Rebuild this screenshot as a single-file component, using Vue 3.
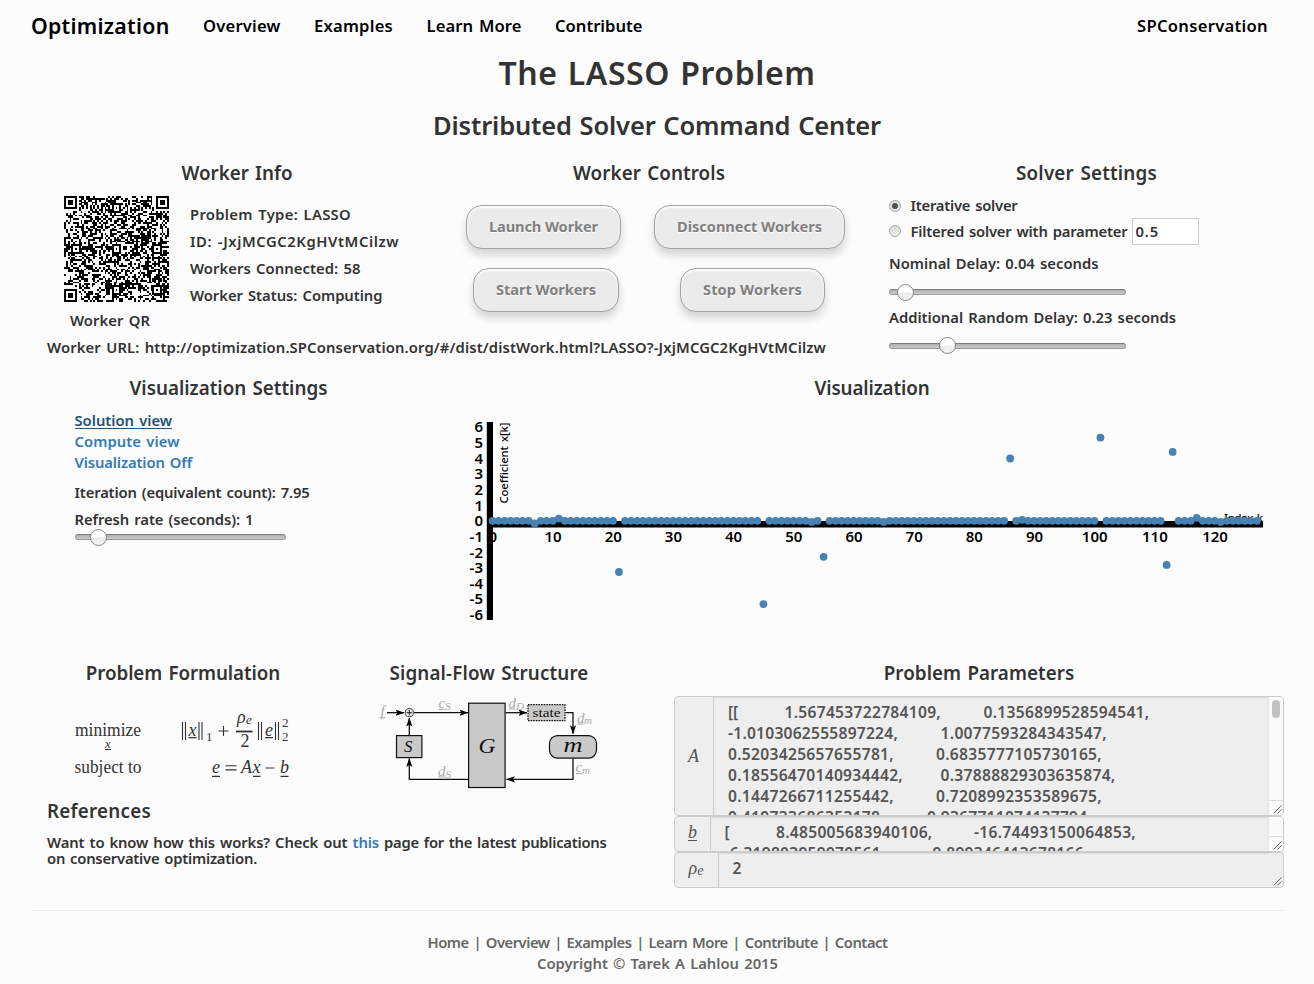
<script setup>
// Spreads a label's tracking so that it fills the given measure in pixels.
const vFit = {
  mounted(el, { value }) {
    const width = el.getBoundingClientRect().width
    el.style.letterSpacing = `${(value - width) / el.textContent.length}px`
  },
}

const navLinks = [['Overview', 77.5], ['Examples', 79], ['Learn More', 95], ['Contribute', 87.5]]

const workerId = '-JxjMCGC2KgHVtMCilzw'
const workerUrl = `http://optimization.SPConservation.org/#/dist/distWork.html?LASSO?${workerId}`
const info = [
  ['Problem Type: LASSO', 161],
  [`ID: ${workerId}`, 209],
  ['Workers Connected: 58', 170.5],
  ['Worker Status: Computing', 192.5],
]

// --- QR code (version 10, level H, byte mode) ---
const EXP = []
const LOG = []
for (let i = 0, v = 1; i < 255; i++) {
  EXP[i] = v
  LOG[v] = i
  v <<= 1
  if (v > 255) v ^= 0x11d
}
const mul = (a, b) => (a && b ? EXP[(LOG[a] + LOG[b]) % 255] : 0)

function errorWords(data, n) {
  let g = [1]
  for (let i = 0; i < n; i++) {
    const r = new Array(g.length + 1).fill(0)
    g.forEach((c, j) => {
      r[j] ^= c
      r[j + 1] ^= mul(c, EXP[i])
    })
    g = r
  }
  const m = [...data, ...new Array(n).fill(0)]
  for (let i = 0; i < data.length; i++) {
    const f = m[i]
    if (f) g.forEach((c, j) => { m[i + j] ^= mul(c, f) })
  }
  return m.slice(data.length)
}

function qrPath(text) {
  const N = 57
  const nec = 28
  const blocks = [15, 15, 15, 15, 15, 15, 16, 16]
  const mask = 5
  const masked = (r, c) => ((r * c) % 2) + ((r * c) % 3) === 0
  const byte = (v) => v.toString(2).padStart(8, '0')
  let bits = '0100' + text.length.toString(2).padStart(16, '0')
  for (const ch of text) bits += byte(ch.charCodeAt(0))
  bits += '0000'
  const d = []
  for (let i = 0; i < bits.length; i += 8) d.push(parseInt(bits.slice(i, i + 8), 2))
  for (let k = 0; d.length < 122; k++) d.push(k % 2 ? 0x11 : 0xec)
  let p = 0
  const db = blocks.map((n) => d.slice(p, (p += n)))
  const eb = db.map((b) => errorWords(b, nec))
  const out = []
  for (let i = 0; i < 16; i++) db.forEach((b) => i < b.length && out.push(b[i]))
  for (let i = 0; i < nec; i++) eb.forEach((b) => out.push(b[i]))
  const stream = out.map(byte).join('')

  const m = Array.from({ length: N }, () => new Array(N).fill(null))
  for (const [y, x] of [[0, 0], [0, N - 7], [N - 7, 0]])
    for (let r = -1; r < 8; r++)
      for (let c = -1; c < 8; c++)
        if (m[y + r] && m[y + r][x + c] !== undefined) {
          const k = Math.max(Math.abs(r - 3), Math.abs(c - 3))
          m[y + r][x + c] = k === 4 || k === 2 ? 0 : 1
        }
  for (const y of [6, 28, 50])
    for (const x of [6, 28, 50])
      if (m[y][x] === null)
        for (let r = -2; r < 3; r++)
          for (let c = -2; c < 3; c++)
            m[y + r][x + c] = Math.max(Math.abs(r), Math.abs(c)) === 1 ? 0 : 1
  for (let i = 8; i < N - 8; i++) m[6][i] = m[i][6] = i % 2 ? 0 : 1
  const f = (2 << 3) | mask
  let rem = f << 10
  for (let i = 14; i >= 10; i--) if ((rem >> i) & 1) rem ^= 0x537 << (i - 10)
  const fmt = ((f << 10) | rem) ^ 0x5412
  for (let i = 0; i < 15; i++) {
    const b = (fmt >> i) & 1
    m[i < 6 ? i : i < 8 ? i + 1 : N - 15 + i][8] = b
    m[8][i < 8 ? N - 1 - i : i < 9 ? 7 : 14 - i] = b
  }
  m[N - 8][8] = 1
  for (let i = 0; i < 18; i++) {
    const b = (0x0a4d3 >> i) & 1
    m[Math.floor(i / 3)][N - 11 + (i % 3)] = b
    m[N - 11 + (i % 3)][Math.floor(i / 3)] = b
  }
  let k = 0
  let up = true
  for (let c = N - 1; c > 0; c -= 2) {
    if (c === 6) c--
    for (let i = 0; i < N; i++) {
      const r = up ? N - 1 - i : i
      for (const x of [c, c - 1])
        if (m[r][x] === null) m[r][x] = +(stream[k++] || 0) ^ (masked(r, x) ? 1 : 0)
    }
    up = !up
  }
  return m.map((row, y) => row.map((v, x) => (v ? `M${x} ${y}h1v1h-1z` : '')).join('')).join('')
}
const qr = qrPath(workerUrl)

// --- Solution chart ---
const xAt = (k) => 35.6 + 6.018 * k
const yAt = (v) => 105.8 - 15.65 * v
const spikes = {
  7: -0.17, 11: 0.14, 21: -3.27, 45: -5.32, 53: -0.07, 55: -2.3, 65: -0.07, 86: 3.98,
  88: 0.06, 101: 5.32, 112: -2.82, 113: 4.4, 117: 0.19, 121: -0.07,
}
const points = Array.from({ length: 128 }, (_, k) => ({ k, v: spikes[k] || 0 }))
const yTicks = [6, 5, 4, 3, 2, 1, 0, -1, -2, -3, -4, -5, -6]
const xTicks = [0, 10, 20, 30, 40, 50, 60, 70, 80, 90, 100, 110, 120]

// --- Problem parameters: [text, left edge, width] per value ---
const matrix = [
  [['[[', 0, 10], ['1.567453722784109,', 56.5, 156.5], ['0.1356899528594541,', 255.5, 166]],
  [['-1.0103062555897224,', 0, 170], ['1.0077593284343547,', 212.5, 166.5]],
  [['0.5203425657655781,', 0, 166], ['0.6835777105730165,', 208, 166]],
  [['0.18556470140934442,', 0, 175], ['0.37888829303635874,', 212.5, 175]],
  [['0.1447266711255442,', 0, 166], ['0.7208992353589675,', 208, 166]],
  [['0.419733686353178,', 0, 157], ['0.9367711074137794,', 199, 165]],
]
const vector = [
  [['[', 0, 4], ['8.485005683940106,', 51.5, 156.5], ['-16.74493150064853,', 249.5, 162]],
  [['-6.319803959970561,', 0, 161], ['9.899346413678166,', 208, 156]],
]
const gapBefore = (line, i) => line[i][1] - (i ? line[i - 1][1] + line[i - 1][2] : 0)

const footerLinks = 'Home | Overview | Examples | Learn More | Contribute | Contact'
</script>

<template>
  <div class="page">
    <header class="nav">
      <a class="brand"><span v-fit="138.5">Optimization</span></a>
      <nav class="links">
        <a v-for="[label, w] in navLinks" :key="label"><span v-fit="w">{{ label }}</span></a>
      </nav>
      <a class="right"><span v-fit="131">SPConservation</span></a>
    </header>

    <h1><span v-fit="317">The LASSO Problem</span></h1>
    <h2><span v-fit="448">Distributed Solver Command Center</span></h2>

    <section class="row workers">
      <div class="left">
        <div class="pair">
          <div class="info">
            <h3><span v-fit="111">Worker Info</span></h3>
            <div class="info-body">
              <figure>
                <svg width="105" height="106" viewBox="0 0 57 57" preserveAspectRatio="none" shape-rendering="crispEdges"><path :d="qr" /></svg>
                <figcaption><span v-fit="80">Worker QR</span></figcaption>
              </figure>
              <div class="facts">
                <p v-for="[label, w] in info" :key="label"><span v-fit="w">{{ label }}</span></p>
              </div>
            </div>
          </div>
          <div class="controls">
            <h3><span v-fit="152">Worker Controls</span></h3>
            <div class="buttons first">
              <button class="launch"><span v-fit="109">Launch Worker</span></button>
              <button class="disconnect"><span v-fit="145">Disconnect Workers</span></button>
            </div>
            <div class="buttons second">
              <button class="start"><span v-fit="100">Start Workers</span></button>
              <button class="stop"><span v-fit="99">Stop Workers</span></button>
            </div>
          </div>
        </div>
        <p class="url"><span v-fit="779">Worker URL: {{ workerUrl }}</span></p>
      </div>

      <div class="settings">
        <h3><span v-fit="141">Solver Settings</span></h3>
        <label class="option"><i class="radio on"></i><span v-fit="107">Iterative solver</span></label>
        <label class="option second-option">
          <i class="radio"></i><span v-fit="217">Filtered solver with parameter</span>
          <b class="field"><span v-fit="23.5">0.5</span></b>
        </label>
        <p class="delay"><span v-fit="209.5">Nominal Delay: 0.04 seconds</span></p>
        <div class="slider"><i class="thumb nominal"></i></div>
        <p class="delay later"><span v-fit="287">Additional Random Delay: 0.23 seconds</span></p>
        <div class="slider"><i class="thumb random"></i></div>
      </div>
    </section>

    <section class="row vis">
      <div class="vis-settings">
        <h3><span v-fit="198">Visualization Settings</span></h3>
        <ul>
          <li><a class="active"><span v-fit="97.5">Solution view</span></a></li>
          <li><a><span v-fit="105">Compute view</span></a></li>
          <li><a><span v-fit="117.5">Visualization Off</span></a></li>
        </ul>
        <p class="iteration"><span v-fit="235">Iteration (equivalent count): 7.95</span></p>
        <p class="refresh"><span v-fit="179">Refresh rate (seconds): 1</span></p>
        <div class="slider short"><i class="thumb rate"></i></div>
      </div>
      <div class="chart">
        <h3><span v-fit="115">Visualization</span></h3>
        <svg width="820" height="215" viewBox="0 0 820 215">
          <g class="ticks">
            <text v-for="t in xTicks" :key="'x' + t" :x="xAt(t) + 0.3" y="127" text-anchor="middle">{{ t }}</text>
            <text v-for="t in yTicks" :key="'y' + t" x="26" :y="yAt(t) + 5.4" text-anchor="end">{{ t }}</text>
          </g>
          <text class="axis-name" x="767" y="106.5" textLength="39">Index k</text>
          <rect x="30" y="106" width="776" height="6.5" />
          <rect x="29.8" y="7" width="6.2" height="198" />
          <text class="axis-name" transform="translate(51 88.5) rotate(-90)" textLength="81">Coefficient x[k]</text>
          <circle v-for="p in points" :key="p.k" :cx="xAt(p.k)" :cy="yAt(p.v)" r="3.9" fill="#4682b4" />
        </svg>
      </div>
    </section>

    <section class="row details">
      <div class="theory">
        <div class="theory-top">
          <div class="formulation">
            <h3><span v-fit="194.5">Problem Formulation</span></h3>
            <svg class="math" width="270" height="100" viewBox="45 700 270 100">
              <g font-size="18">
                <text x="75" y="735.5" textLength="66" lengthAdjust="spacingAndGlyphs">minimize</text>
                <text x="74.500" y="772.5" textLength="67" lengthAdjust="spacingAndGlyphs">subject to</text>
                <text class="i" x="105" y="748" font-size="12.5">x</text>
                <text class="i" x="188.5" y="735.5">x</text>
                <text x="206" y="740.5" font-size="13">1</text>
                <text class="i" x="237" y="723">ρ</text>
                <text class="i" x="246" y="724" font-size="13">e</text>
                <text x="240.5" y="747">2</text>
                <text class="i" x="265" y="735.5">e</text>
                <text x="282" y="726.5" font-size="13">2</text>
                <text x="282" y="740.5" font-size="13">2</text>
                <text class="i" x="212" y="772.5">e</text>
                <text class="i" x="241" y="772.5">A</text>
                <text class="i" x="252.5" y="772.5">x</text>
                <text class="i" x="280" y="772.5">b</text>
              </g>
              <path d="M182.5 722v18M185.5 722v18M199 722v18M202 722v18M258.5 722v18M261.5 722v18M275.5 722v18M278.5 722v18" stroke-width="1.1" />
              <path d="M105 749.5h6M188.5 737.6h8M265 737.6h8M212 776.4h8M253 776.4h7.5M280.5 776.4h8" stroke-width="1.1" />
              <path d="M218.5 731h10M223.5 726v10M225.5 765.7h11M225.5 769.9h11M265.5 768h9" stroke-width="1.1" />
              <path d="M236 731.5h16.5" stroke-width="1.8" />
            </svg>
          </div>
          <div class="flow">
            <h3><span v-fit="199">Signal-Flow Structure</span></h3>
            <svg class="diagram" width="230" height="96" viewBox="375 696 230 96">
              <defs>
                <marker id="tip" viewBox="0 0 9 8" refX="8.5" refY="4" markerWidth="9" markerHeight="8" markerUnits="userSpaceOnUse" orient="auto">
                  <path d="M0 .9 9 4 0 7.1 2 4z" />
                </marker>
              </defs>
              <g class="wires" marker-end="url(#tip)">
                <path d="M387 712.7h17" />
                <path d="M414 712.7h54" />
                <path d="M505.5 712.7h21.5" />
                <path d="M565.5 712.7h7.5v21" />
                <path d="M573 758.5v20.8h-66.5" />
                <path d="M468.5 779.3h-59.2v-20.8" />
                <path d="M409.3 735.5v-17.5" />
              </g>
              <circle cx="409.3" cy="712.7" r="4.1" fill="#e8e8e8" stroke="#333" />
              <path d="M409.3 710v5.400M406.600 712.7h5.400" stroke="#222" stroke-width="1" />
              <g fill="#c9c9c9" stroke="#111" stroke-width="1.2">
                <rect x="396.5" y="735.6" width="25.4" height="22" />
                <rect x="468.6" y="703.2" width="36.5" height="84.3" />
                <rect x="549.5" y="735.6" width="47" height="22.5" rx="8" />
                <rect x="528" y="704.7" width="37" height="16" stroke-dasharray="1.6 1" />
              </g>
              <g class="names">
                <text class="i" x="404" y="752" font-size="17">S</text>
                <text class="i" x="478.500" y="753" font-size="22" textLength="17" lengthAdjust="spacingAndGlyphs">G</text>
                <text class="i" x="563.500" y="752" font-size="20" textLength="19" lengthAdjust="spacingAndGlyphs">m</text>
                <text x="532.5" y="717" font-size="12.500" textLength="28" lengthAdjust="spacingAndGlyphs">state</text>
              </g>
              <g class="signals i">
                <text x="380.5" y="716">f</text>
                <text x="438.500" y="708">c</text><text x="445" y="709.5" class="sub">S</text>
                <text x="438" y="775.500">d</text><text x="445.5" y="777.500" class="sub">S</text>
                <text x="508.5" y="707.500">d</text><text x="516" y="709.5" class="sub">D</text>
                <text x="577" y="722.5">d</text><text x="584" y="724" class="sub">m</text>
                <text x="575.5" y="772">c</text><text x="582" y="773.5" class="sub">m</text>
                <path d="M379.5 717.7h6M438.5 709.5h6M438 777h7M508.5 709h7M577 724h6.5M576 773.5h6" />
              </g>
            </svg>
          </div>
        </div>
        <h3 class="ref-title"><span v-fit="104">References</span></h3>
        <p class="ref">
          <span v-fit="300.5">Want to know how this works? Check out</span><a><span v-fit="26.5">this</span></a><span v-fit="222.5">page for the latest publications</span>
        </p>
        <p class="ref"><span v-fit="210">on conservative optimization.</span></p>
      </div>

      <div class="params">
        <h3><span v-fit="190.5">Problem Parameters</span></h3>
        <div class="group a">
          <div class="addon"><em>A</em></div>
          <div class="area">
            <div v-for="(line, l) in matrix" :key="l" class="line">
              <span v-for="(n, i) in line" :key="i" v-fit="n[2]" :style="{ marginLeft: gapBefore(line, i) + 'px' }">{{ n[0] }}</span>
            </div>
          </div>
          <div class="scroll"><i class="bar"></i><svg class="grip" width="14" height="14"><path d="M4.5 12.5l8-8M8.5 12.5l4-4" /></svg></div>
        </div>
        <div class="group b">
          <div class="addon"><em class="under">b</em></div>
          <div class="area">
            <div v-for="(line, l) in vector" :key="l" class="line">
              <span v-for="(n, i) in line" :key="i" v-fit="n[2]" :style="{ marginLeft: gapBefore(line, i) + 'px' }">{{ n[0] }}</span>
            </div>
          </div>
          <div class="scroll"><svg class="grip" width="14" height="14"><path d="M4.5 12.5l8-8M8.5 12.5l4-4" /></svg></div>
        </div>
        <div class="group rho">
          <div class="addon"><em>ρ<small>e</small></em></div>
          <div class="area"><div class="line"><span>2</span></div></div>
          <svg class="grip plain" width="14" height="14"><path d="M4.5 12.5l8-8M8.5 12.5l4-4" /></svg>
        </div>
      </div>
    </section>

    <footer>
      <p><span v-fit="460">{{ footerLinks }}</span></p>
      <p><span v-fit="241">Copyright © Tarek A Lahlou 2015</span></p>
    </footer>
  </div>
</template>

<style>
body { background: #fcfcfc; }
</style>

<style scoped>
.page {
  width: 1314px; height: 984px; overflow: hidden; box-sizing: border-box;
  background: #fcfcfc; color: #333;
  font: 600 14.8px/21px "Noto Sans", "Open Sans", sans-serif;
  word-spacing: .09em;
}
h1, h2, h3, p, ul, figure { margin: 0; padding: 0; }
ul { list-style: none; }
span { display: inline-block; white-space: pre; }
svg { display: block; }
h1, h2, h3 { font-weight: 600; text-align: center; }
h1 { font-size: 32px; line-height: 42px; }
h2 { font-size: 25.5px; line-height: 62px; height: 64px; }
h3 { font-size: 18.8px; line-height: 30px; }
a { color: #337ab7; }

.nav { display: flex; height: 52px; line-height: 52px; padding: 0 46px 0 31px; }
.nav a { color: #000; font-size: 16.6px; }
.nav .brand { font-size: 21.3px; margin-right: 33.5px; }
.links { display: flex; gap: 33.5px; flex: 1; }

.row { display: flex; }
.workers { height: 215px; }
.left { width: 842px; margin-left: 32px; }
.pair { display: flex; height: 179px; }
.info { width: 410px; }
.info-body { display: flex; padding: 8px 0 0 32px; }
figure { width: 105px; }
figcaption { margin-top: 8px; margin-left: 6px; }
.facts { margin: 5px 0 0 21px; line-height: 27px; }
.controls { width: 414px; }
.url { margin-left: 15px; }
.buttons { display: flex; }
.first { margin: 17px 0 0 24px; gap: 33px; }
.second { margin: 19px 0 0 31px; gap: 61px; }
button {
  box-sizing: border-box; height: 44px; padding: 0 0 2px; border: 1px solid #a3a3a3; border-radius: 16px;
  background: #ebebeb; color: #808080; font: 700 14.6px/40px "Noto Sans", "Open Sans", sans-serif;
  text-shadow: 0 1px 1px #fff; box-shadow: inset 0 2px 2px #fff, 0 6px 8px rgba(0, 0, 0, .16);
}
.launch { width: 155px; }
.disconnect { width: 191px; }
.start { width: 146px; }
.stop { width: 145px; }

.settings { width: 425px; }
.settings > :not(h3) { margin-left: 15px; }
.option { display: flex; align-items: center; height: 25px; margin-top: 5px; }
.second-option { margin-top: 0; height: 27px; }
.second-option > .radio, .second-option > span { margin-top: -1px; }
.radio {
  width: 12px; height: 12px; box-sizing: border-box; border: 1px solid #a8a8a8; border-radius: 50%;
  background: linear-gradient(#d9d9d9, #ececec); margin-right: 9.5px;
}
.on { background: radial-gradient(circle, #555 0 2.7px, #e2e2e2 3.5px); }
.field {
  box-sizing: border-box; width: 67px; height: 27px; margin-left: 4px; padding-left: 3px;
  border: 1px solid #ccc; background: #fff; line-height: 24px; font-weight: 600;
}
.delay { margin-top: 8px; height: 21px; }
.settings .later { margin-top: 11.5px; }
.slider {
  width: 237px; height: 6px; box-sizing: border-box; border: 1px solid #9a9a9a; border-top: 1.5px solid #7c7c7c;
  border-radius: 3px; background: linear-gradient(#b0b0b0, #cacaca); position: relative;
}
.settings .slider { margin-top: 15px; }
.thumb {
  position: absolute; top: -6.5px; width: 17px; height: 17px; box-sizing: border-box; border-radius: 50%;
  border: 1.3px solid #858585; background: linear-gradient(#fff 45%, #ececec 55%, #f4f4f4);
}
.nominal { left: 6.5px; }
.random { left: 48.5px; }
.rate { left: 14px; }

.vis { height: 285px; }
.vis-settings { width: 393px; margin-left: 32px; }
.vis-settings > :not(h3) { margin-left: 42.5px; }
.vis-settings ul { margin-top: 7px; }
.active { color: #23527c; }
.active span { border-bottom: 1px solid #23527c; line-height: 16px; }
.iteration { margin-top: 9px; }
.refresh { margin-top: 6px; }
.short { width: 211px; margin-top: 4px; }
.chart { width: 830px; margin-left: 32px; }
.chart svg { margin-top: 12px; }
.ticks { font-size: 15px; fill: #000; }
.axis-name { font-size: 11.3px; fill: #000; font-weight: 500; }

.details { height: 252px; }
.theory { width: 615px; margin-left: 32px; }
.theory-top { display: flex; height: 138px; }
.formulation { width: 302px; }
.flow { width: 308px; margin-left: 1px; }
.math { margin: 12px 0 0 13px; font-family: "Liberation Serif", serif; font-weight: 400; fill: #333; word-spacing: 0; }
.math path { stroke: #333; fill: none; }
.math .i, .diagram .i { font-style: italic; }
.diagram { margin: 8px 0 0 40px; font-family: "Liberation Serif", serif; font-weight: 400; }
.wires path { fill: none; stroke: #111; stroke-width: 1.3; }
.names { fill: #111; }
.signals { fill: #aaa; font-size: 15px; }
.signals path { stroke: #aaa; }
.signals .sub { font-size: 11px; }
.ref-title { text-align: left; margin-left: 15px; }
.ref-title + .ref { margin-top: 8px; }
.ref { margin-left: 15px; line-height: 16px; height: 16px; display: flex; gap: 5px; }

.params { width: 610px; margin-left: 27px; }
.group {
  display: flex; box-sizing: border-box; overflow: hidden; border: 1px solid #ccc; border-radius: 4px;
  background: #eee; color: #555; position: relative;
}
.a { height: 120px; margin-top: 8px; }
.b { height: 36px; }
.rho { height: 36px; }
.addon {
  width: 39px; border-right: 1px solid #ccc; display: flex; align-items: center; justify-content: center;
  font: italic 400 18px/20px "Liberation Serif", serif; box-sizing: border-box; flex: none;
}
.b .addon { width: 36px; }
.rho .addon { width: 44px; }
.addon small { font-size: 14px; vertical-align: -1px; }
.addon em { padding: 0 1px 1px 0; }
.b .under { border-bottom: 1px solid #555; line-height: 15px; padding: 0; margin-bottom: 3px; }
.area { flex: 1; overflow: hidden; padding: 5px 0 0 14px; font-size: 15.6px; font-weight: 650; box-shadow: inset 0 1px 1px rgba(0, 0, 0, .08); }
.b .area, .rho .area { padding-left: 13.5px; }
.line { height: 21px; white-space: nowrap; display: flex; }
.scroll { width: 14px; border-left: 1px solid #e6e6e6; background: #fafafa; display: flex; flex-direction: column; }
.bar { display: block; width: 8px; height: 18px; margin: 3px 0 0 2.5px; border-radius: 4px; background: #c1c1c1; }
.grip { margin-top: auto; background: #fff; border-top: 1px solid #ddd; flex: none; }
.grip path { stroke: #666; stroke-width: 1; fill: none; }
.plain { background: none; border-top: 0; }

footer { margin: 0 30px 0 32px; border-top: 1px solid #eee; padding-top: 21px; text-align: center; color: #666; }
footer p { margin-right: 1px; }
</style>
